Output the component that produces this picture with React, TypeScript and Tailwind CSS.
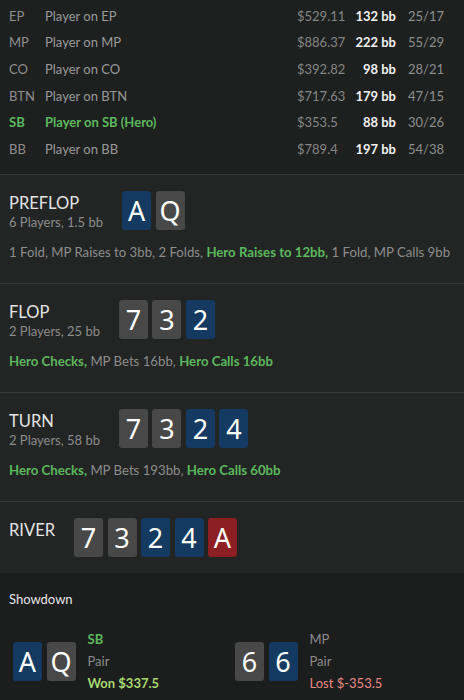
import React from "react";

type Suit = "b" | "g" | "r";

const players = [
  { pos: "EP", name: "Player on EP", money: "$529.11", bb: "132 bb", stat: "25/17" },
  { pos: "MP", name: "Player on MP", money: "$886.37", bb: "222 bb", stat: "55/29" },
  { pos: "CO", name: "Player on CO", money: "$392.82", bb: "98 bb", stat: "28/21" },
  { pos: "BTN", name: "Player on BTN", money: "$717.63", bb: "179 bb", stat: "47/15" },
  { pos: "SB", name: "Player on SB (Hero)", money: "$353.5", bb: "88 bb", stat: "30/26", hero: true },
  { pos: "BB", name: "Player on BB", money: "$789.4", bb: "197 bb", stat: "54/38" },
];

function Card({ v, s }: { v: string; s: Suit }) {
  const bg = s === "b" ? "bg-[#143a61]" : s === "r" ? "bg-[#8c1f22]" : "bg-[#484848]";
  return (
    <div className={`w-[29px] h-[39px] rounded-[3px] flex items-center justify-center font-['Noto_Sans',sans-serif] text-[27px] leading-none text-white ${bg}`}>
      {v}
    </div>
  );
}

function Cards({ cards }: { cards: [string, Suit][] }) {
  return (
    <div className="flex gap-[4.5px]">
      {cards.map(([v, s], i) => (
        <Card key={i} v={v} s={s} />
      ))}
    </div>
  );
}

function Street({ title, sub, cards, children }: {
  title: string; sub?: string; cards: [string, Suit][]; children?: React.ReactNode;
}) {
  return (
    <div className="border-t border-[#383a39] bg-[#232524] px-[9px] pt-[16px] pb-[16px]">
      <div className="flex items-start gap-[19px]">
        <div className="mt-[2px]">
          <div className="text-[16.5px] leading-[20px] text-[#e4e4e4]">{title}</div>
          {sub && <div className="text-[13px] leading-[18px] text-[#8c8c8c]">{sub}</div>}
        </div>
        <Cards cards={cards} />
      </div>
      {children && <div className="mt-[12px] mb-[6px] whitespace-nowrap text-[13.2px] leading-[18px] text-[#8c8c8c]">{children}</div>}
    </div>
  );
}

const G = ({ children }: { children: React.ReactNode }) => (
  <span className="font-bold text-[#5cb85c]">{children}</span>
);

export default function App() {
  return (
    <div className="w-[464px] h-[700px] overflow-hidden bg-[#1c1d1d] font-['Lato',sans-serif]">
      {/* Players */}
      <div className="bg-[#1e201f] pt-[3px] pb-[11px]">
        {players.map((p) => (
          <div key={p.pos} className="flex items-center h-[26.7px] pl-[9px] pr-[8px] text-[13px] whitespace-nowrap">
            <div className={`w-[36px] ${p.hero ? "font-bold text-[#5cb85c]" : "text-[#8e8e8e]"}`}>{p.pos}</div>
            <div className={`flex-1 ${p.hero ? "font-bold text-[#5cb85c]" : "text-[#999999]"}`}>{p.name}</div>
            <div className="w-[58px] text-[#858585]">{p.money}</div>
            <div className="w-[41px] text-right font-bold text-[#f2f2f2]">{p.bb}</div>
            <div className="w-[48px] ml-[12px] text-[#8e8e8e]">{p.stat}</div>
          </div>
        ))}
      </div>

      <Street title="PREFLOP" sub="6 Players, 1.5 bb" cards={[["A", "b"], ["Q", "g"]]}>
        1 Fold, MP Raises to 3bb, 2 Folds, <G>Hero Raises to 12bb,</G> 1 Fold, MP Calls 9bb
      </Street>
      <Street title="FLOP" sub="2 Players, 25 bb" cards={[["7", "g"], ["3", "g"], ["2", "b"]]}>
        <G>Hero Checks,</G> MP Bets 16bb, <G>Hero Calls 16bb</G>
      </Street>
      <Street title="TURN" sub="2 Players, 58 bb" cards={[["7", "g"], ["3", "g"], ["2", "b"], ["4", "b"]]}>
        <G>Hero Checks,</G> MP Bets 193bb, <G>Hero Calls 60bb</G>
      </Street>
      <Street title="RIVER" cards={[["7", "g"], ["3", "g"], ["2", "b"], ["4", "b"], ["A", "r"]]} />

      {/* Showdown */}
      <div className="bg-[#1c1d1d] pt-[17px]">
        <div className="px-[9px] text-[13px] leading-[18px] text-[#e6e6e6]">Showdown</div>
        <div className="mt-[20px] grid grid-cols-[222px_1fr] pl-[13px]">
          <div className="flex items-center gap-[12px]">
            <Cards cards={[["A", "b"], ["Q", "g"]]} />
            <div className="text-[13px] leading-[22px]">
              <div className="font-bold text-[#5cb85c]">SB</div>
              <div className="text-[#8c8c8c]">Pair</div>
              <div className="font-bold text-[#a6d96f]">Won $337.5</div>
            </div>
          </div>
          <div className="flex items-center gap-[12px]">
            <Cards cards={[["6", "g"], ["6", "b"]]} />
            <div className="text-[13px] leading-[22px]">
              <div className="text-[#8c8c8c]">MP</div>
              <div className="text-[#8c8c8c]">Pair</div>
              <div className="text-[#e88a80]">Lost $-353.5</div>
            </div>
          </div>
        </div>
      </div>
    </div>
  );
}
